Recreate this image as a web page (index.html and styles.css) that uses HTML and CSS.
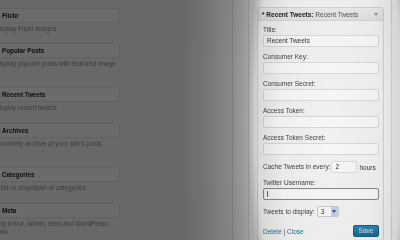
FILE: index.html
```html
<!DOCTYPE html>
<html lang="en">
<head>
    <meta charset="UTF-8">
    <meta name="viewport" content="width=device-width, initial-scale=1.0">
    <title>Widgets</title>
    <link rel="stylesheet" href="styles.css">
</head>
<body>
    <div class="page">
        <div class="available">
            <div class="widget-row first">
                <div class="widget-title">Flickr</div>
                <div class="widget-desc">Display Flickr images</div>
            </div>
            <div class="widget-row tall">
                <div class="widget-title">Popular Posts</div>
                <div class="widget-desc">Display popular posts with featured image</div>
            </div>
            <div class="widget-row">
                <div class="widget-title">Recent Tweets</div>
                <div class="widget-desc">Display recent tweets</div>
            </div>
            <div class="widget-row tall">
                <div class="widget-title">Archives</div>
                <div class="widget-desc">A monthly archive of your site's posts</div>
            </div>
            <div class="widget-row">
                <div class="widget-title">Categories</div>
                <div class="widget-desc">A list or dropdown of categories</div>
            </div>
            <div class="widget-row">
                <div class="widget-title">Meta</div>
                <div class="widget-desc">Log in/out, admin, feed and WordPress<br>links</div>
            </div>
        </div>

        <div class="sidebar">
            <div class="sidebar-inner">
                <div class="widget">
                    <div class="widget-top">
                        <span class="widget-name"><b>* Recent Tweets:</b> Recent Tweets</span>
                        <span class="arrow"></span>
                    </div>
                    <div class="widget-inside">
                        <div class="field">
                            <label>Title:</label>
                            <div class="input">Recent Tweets</div>
                        </div>
                        <div class="field">
                            <label>Consumer Key:</label>
                            <div class="input"></div>
                        </div>
                        <div class="field">
                            <label>Consumer Secret:</label>
                            <div class="input"></div>
                        </div>
                        <div class="field">
                            <label>Access Token:</label>
                            <div class="input"></div>
                        </div>
                        <div class="field">
                            <label>Access Token Secret:</label>
                            <div class="input"></div>
                        </div>
                        <div class="field inline">
                            <label>Cache Tweets in every:</label>
                            <div class="input small">2</div>
                            <span>hours</span>
                        </div>
                        <div class="field">
                            <label>Twitter Username:</label>
                            <div class="input focused"><span class="caret"></span></div>
                        </div>
                        <div class="field inline">
                            <label>Tweets to display:</label>
                            <div class="select">3<span class="select-btn"></span></div>
                        </div>
                        <div class="widget-control">
                            <span class="links"><a>Delete</a> | <a>Close</a></span>
                            <span class="save">Save</span>
                        </div>
                    </div>
                </div>
            </div>
        </div>
    </div>
    <div class="spotlight"></div>
</body>
</html>
```

FILE: styles.css
```css
* {
    box-sizing: border-box;
}
body {
    margin: 0;
    width: 400px;
    height: 240px;
    overflow: hidden;
    background-color: #f1f1f1;
    font-family: 'Liberation Sans', Arial, sans-serif;
    font-size: 6.5px;
    color: #333;
    position: relative;
}
.page {
    display: flex;
    height: 240px;
    filter: blur(0.45px);
}

/* available widgets */
.available {
    flex: none;
    width: 128px;
    margin-left: -8px;
    padding-top: 8px;
}
.widget-row {
    height: 36px;
}
.widget-row.first {
    height: 35px;
}
.widget-row.tall {
    height: 44px;
}
.widget-title {
    height: 15px;
    line-height: 13px;
    padding-left: 9px;
    background-color: #f8f8f8;
    border: 1px solid #e2e2e2;
    border-radius: 2px;
    font-size: 6.3px;
    font-weight: bold;
    color: #222;
}
.widget-desc {
    width: 134px;
    margin-top: 2px;
    padding-left: 3px;
    line-height: 8px;
    color: #8a8a8a;
}

/* sidebar */
.sidebar {
    flex: none;
    width: 168px;
    margin-left: auto;
    border-left: 1px solid #d8d8d8;
    background-color: #f4f4f4;
    padding-left: 15px;
}
.sidebar-inner {
    height: 240px;
    width: 144px;
    border-left: 1px solid #dcdcdc;
    border-right: 1px solid #dcdcdc;
    background-color: #fafafa;
    padding: 7px 7px 0 8px;
}
.widget {
    border: 1px solid #dadada;
    border-radius: 3px;
    background-color: #f9f9f9;
}
.widget-top {
    height: 13px;
    display: flex;
    align-items: center;
    justify-content: space-between;
    padding: 0 5px 0 4px;
    background: linear-gradient(#f2f2f2, #e8e8e8);
    border-bottom: 1px solid #dcdcdc;
    color: #555;
}
.widget-name b {
    color: #222;
}
.arrow {
    width: 0;
    height: 0;
    border-left: 2px solid transparent;
    border-right: 2px solid transparent;
    border-top: 3px solid #999;
}
.widget-inside {
    padding: 5px 4px 3px 5px;
}
.field {
    margin-bottom: 6px;
}
.field label {
    display: block;
    line-height: 8px;
    margin-bottom: 1px;
    color: #444;
}
.input {
    height: 12px;
    line-height: 10px;
    padding: 0 3px;
    background-color: #fff;
    border: 1px solid #e0e0e0;
    border-radius: 2px;
    color: #333;
}
.input.focused {
    border-color: #8f8f8f;
    box-shadow: inset 0 0 1px #ccc;
}
.caret {
    display: inline-block;
    width: 1px;
    height: 6px;
    background-color: #666;
    vertical-align: middle;
}
.field.inline {
    display: flex;
    align-items: center;
    gap: 1px;
}
.field.inline label {
    display: inline;
    margin-bottom: 0;
}
.input.small {
    width: 26px;
    margin-right: 1px;
}
.select {
    width: 22px;
    height: 11px;
    line-height: 9px;
    padding-left: 3px;
    margin-left: 1px;
    position: relative;
    background-color: #fff;
    border: 1px solid #d0d0d0;
    border-radius: 2px;
}
.select-btn {
    position: absolute;
    right: 0;
    top: 0;
    width: 7px;
    height: 9px;
    background-color: #c9d8ef;
}
.select-btn::after {
    content: '';
    position: absolute;
    left: 1px;
    top: 3px;
    border-left: 2.5px solid transparent;
    border-right: 2.5px solid transparent;
    border-top: 3px solid #2a4f9a;
}
.widget-control {
    display: flex;
    justify-content: space-between;
    align-items: center;
    margin-top: 8px;
}
.links {
    color: #555;
}
.links a {
    color: #21759b;
}
.save {
    width: 26px;
    height: 12px;
    line-height: 10px;
    text-align: center;
    color: #d8ecf5;
    background: linear-gradient(#2a8bb8, #1e6b91);
    border: 1px solid #1b5f80;
    border-radius: 2px;
}

/* dim overlay with spotlight on the sidebar */
.spotlight {
    position: absolute;
    left: 0;
    top: 0;
    width: 400px;
    height: 240px;
    pointer-events: none;
    background: radial-gradient(ellipse 100px 380px at 330px 120px,
        rgba(0, 0, 0, 0.03) 0%,
        rgba(0, 0, 0, 0.06) 50%,
        rgba(0, 0, 0, 0.13) 73%,
        rgba(0, 0, 0, 0.33) 82%,
        rgba(0, 0, 0, 0.43) 98%,
        rgba(0, 0, 0, 0.53) 130%,
        rgba(0, 0, 0, 0.57) 150%);
}
```
